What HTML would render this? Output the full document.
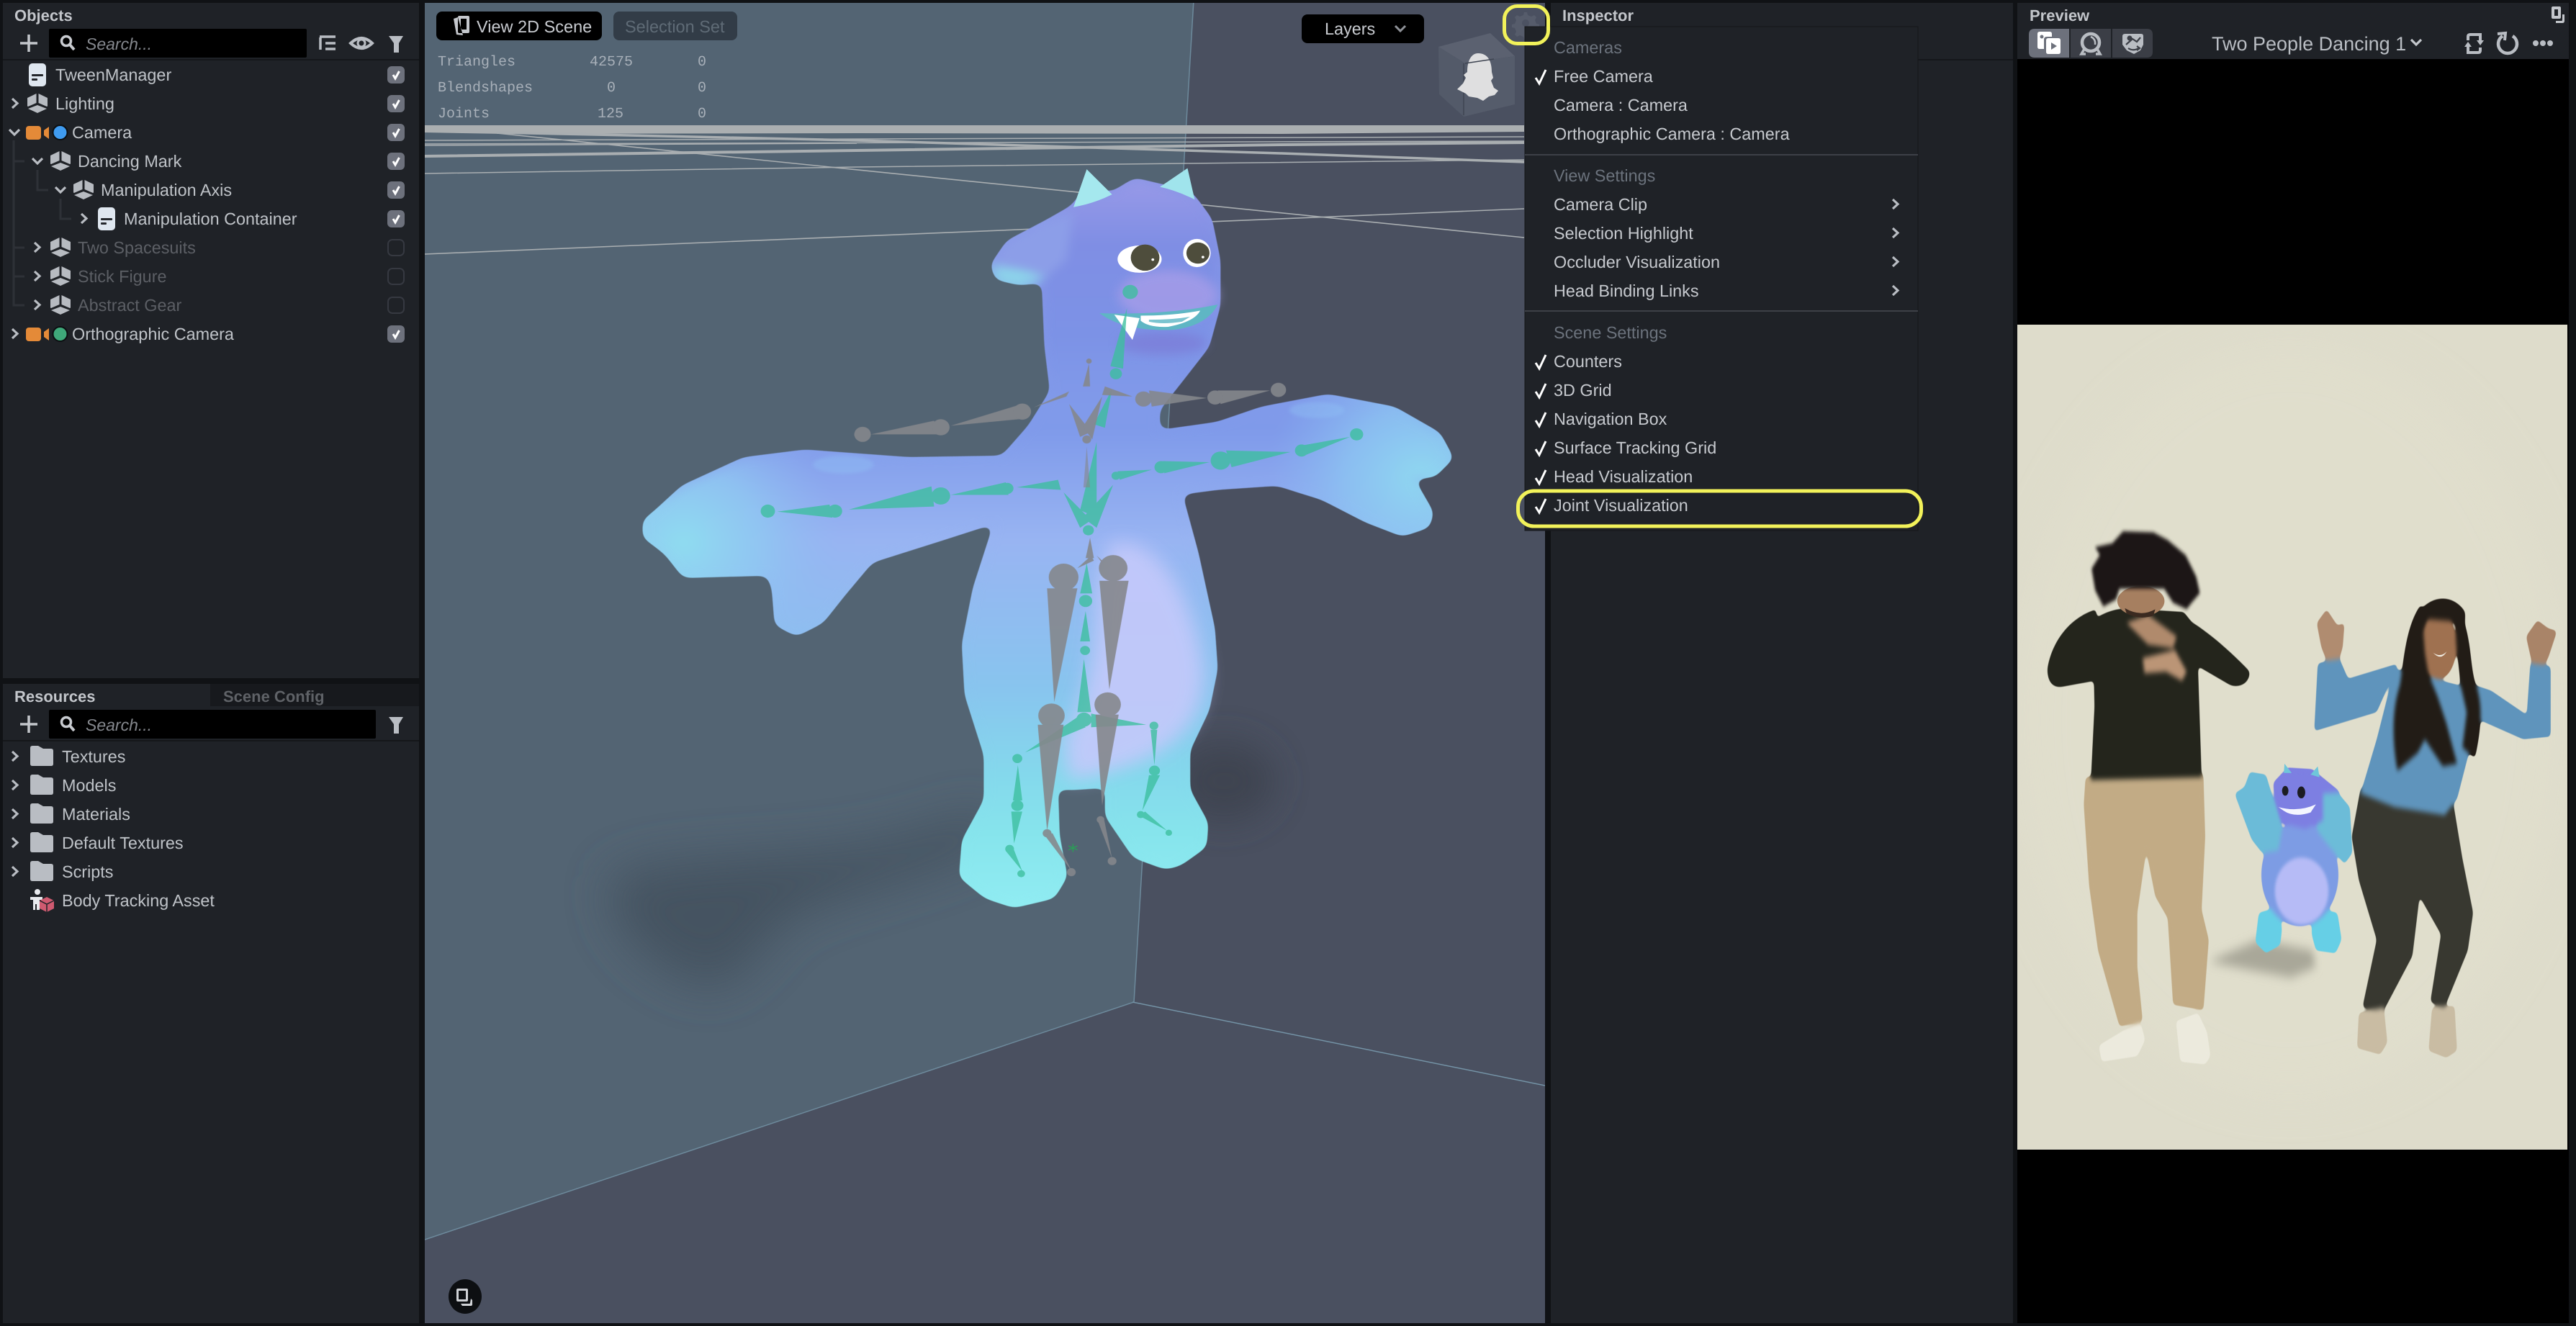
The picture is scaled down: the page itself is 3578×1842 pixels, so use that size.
<!DOCTYPE html>
<html><head><meta charset="utf-8"><title>Lens Studio</title>
<style>
html,body{margin:0;padding:0;background:#0f1114;width:3578px;height:1842px;overflow:hidden}
svg{display:block;position:absolute;left:0;top:0}
text{font-family:"Liberation Sans",sans-serif;font-size:23.4px;fill:#bfc3c8;text-rendering:geometricPrecision}
.b{font-weight:700;font-size:22px;fill:#c3c6cb}
.dim{fill:#5c5f65}
.s{font-style:italic;font-size:23px;fill:#85888e}
.m{font-family:"Liberation Mono",monospace;font-size:20px;fill:#a8b0b9}
.h{fill:#6b727c}
.mi{fill:#c6c9ce}
</style></head><body>
<svg width="3578" height="1842" viewBox="0 0 3578 1842" xmlns="http://www.w3.org/2000/svg">
<defs>
<filter id="b60" x="-50%" y="-50%" width="200%" height="200%"><feGaussianBlur stdDeviation="32"/></filter>
<filter id="b25" x="-50%" y="-50%" width="200%" height="200%"><feGaussianBlur stdDeviation="18"/></filter>
<filter id="b10" x="-50%" y="-50%" width="200%" height="200%"><feGaussianBlur stdDeviation="10"/></filter>
<filter id="b3" x="-20%" y="-20%" width="140%" height="140%"><feGaussianBlur stdDeviation="3.500"/></filter>
<filter id="b14" x="-50%" y="-50%" width="200%" height="200%"><feGaussianBlur stdDeviation="24"/></filter>
<filter id="sm" x="-10%" y="-10%" width="120%" height="120%" color-interpolation-filters="sRGB"><feGaussianBlur stdDeviation="9"/><feComponentTransfer><feFuncA type="linear" slope="14" intercept="-6.500"/></feComponentTransfer></filter>
<filter id="sp" x="-10%" y="-10%" width="120%" height="120%" color-interpolation-filters="sRGB"><feGaussianBlur stdDeviation="5"/><feComponentTransfer><feFuncA type="linear" slope="6" intercept="-2.500"/></feComponentTransfer></filter>
<linearGradient id="mg" gradientUnits="userSpaceOnUse" x1="0" y1="60" x2="0" y2="1510">
<stop offset="0" stop-color="#8a96e6"/><stop offset=".35" stop-color="#7f9aea"/><stop offset=".5" stop-color="#98b4f2"/><stop offset=".7" stop-color="#88c4ee"/><stop offset=".82" stop-color="#84d8ec"/><stop offset=".9" stop-color="#86e4ec"/><stop offset="1" stop-color="#90ecf2"/>
</linearGradient>
<radialGradient id="hl" gradientUnits="userSpaceOnUse" cx="130" cy="790" r="290"><stop offset="0" stop-color="#8fdcf0"/><stop offset=".5" stop-color="#8fc8f2" stop-opacity=".8"/><stop offset="1" stop-color="#8fb8f2" stop-opacity="0"/></radialGradient>
<radialGradient id="hr" gradientUnits="userSpaceOnUse" cx="1470" cy="660" r="280"><stop offset="0" stop-color="#8fd8f0"/><stop offset=".5" stop-color="#8cc4f2" stop-opacity=".8"/><stop offset="1" stop-color="#88b4f2" stop-opacity="0"/></radialGradient>
<linearGradient id="ho" gradientUnits="userSpaceOnUse" x1="850" y1="60" x2="850" y2="520"><stop offset="0" stop-color="#9a9ae8"/><stop offset=".3" stop-color="#7f8ee4"/><stop offset=".7" stop-color="#7c92e6"/><stop offset="1" stop-color="#7c96e8" stop-opacity="0"/></linearGradient>
<g id="grp"><path d="M0 6 L12.500 0 L12.500 13 L1 18 Q0 18 0 17Z M15.500 0 L28 6 L28 17 Q28 18 27 18 L15.500 13Z M14 16 L27 21 L14 27 L1 21Z" fill="#b7bbc1"/></g>
<g id="scr"><rect width="24" height="32" rx="5" fill="#dfe7f0"/><rect x="4" y="15" width="16" height="3" rx="1" fill="#24272c"/><rect x="4" y="21" width="8" height="3" rx="1" fill="#24272c"/></g>
<g id="cam"><rect x="0" y="0" width="21" height="19" rx="4" fill="#e48a38"/><path d="M25 6 L32 1 L32 18 L25 13Z" fill="#e48a38"/></g>
<path id="cr" d="M0 0 L7 6.500 L0 13" fill="none" stroke="#b9bdc3" stroke-width="3.200"/>
<path id="cd" d="M0 0 L7 7 L14 0" fill="none" stroke="#b9bdc3" stroke-width="3.200"/>
<g id="on"><rect width="24" height="24" rx="6" fill="#6d717c"/><path d="M8 12 L11 17 L16.500 7" fill="none" stroke="#fff" stroke-width="3"/></g>
<rect id="off" x="1" y="1" width="22" height="22" rx="6" fill="none" stroke="#363941" stroke-width="2"/>
<path id="fold" d="M0 3 Q0 0 3 0 L11 0 L18 4 L29 4 Q32 4 32 7 L32 25 Q32 28 29 28 L3 28 Q0 28 0 25Z" fill="#b9bdc3"/>
<g id="srch"><circle cx="-2" cy="-3" r="6.500" fill="none" stroke="#c8cbd0" stroke-width="3.500"/><path d="M3 2 L9 9" stroke="#c8cbd0" stroke-width="4"/></g>
<path id="plus" d="M-12 0 H12 M0 -12 V12" stroke="#c4c7cc" stroke-width="3.500"/>
<path id="filt" d="M-10 -10 H10 L4 0 V13 L-3 13 V0Z" fill="#b9bdc3"/>
<path id="mck" d="M0 12 L5 20 L14 1" fill="none" stroke="#fff" stroke-width="3"/>
</defs>

<!-- app background -->
<rect width="3578" height="1842" fill="#101215"/>

<!-- Objects panel -->
<rect x="4" y="4" width="578" height="938" fill="#1f2227"/>
<rect x="4" y="82" width="578" height="2" fill="#15171a"/>
<text class="b" x="20" y="29">Objects</text>
<use href="#plus" x="40" y="60"/>
<rect x="68" y="40" width="358" height="40" rx="2" fill="#000"/>
<use href="#srch" x="94" y="60"/>
<text class="s" x="119" y="69">Search...</text>
<path d="M444 51 H466 M452 60 H466 M452 68 H466 M445 52 V69" stroke="#b9bdc3" stroke-width="3.500" fill="none"/>
<path d="M487 60 Q502 46 517 60 Q502 74 487 60Z" fill="none" stroke="#b9bdc3" stroke-width="4"/><circle cx="502" cy="60" r="5" fill="none" stroke="#b9bdc3" stroke-width="3"/>
<use href="#filt" x="550" y="60"/>

<path d="M19 195 V424 H34 M19 224 H34 M19 344 H34 M19 384 H34 M52 236 V264 H67 M84 276 V304 H99" fill="none" stroke="#2e3137" stroke-width="3"/>

<use href="#scr" x="40" y="88"/><text x="77" y="112">TweenManager</text>
<use href="#cr" x="17" y="137"/><use href="#grp" x="38" y="130"/><text x="77" y="152">Lighting</text>
<use href="#cd" x="13" y="180"/><use href="#cam" x="36" y="175"/><circle cx="83.500" cy="184" r="10" fill="#3f9bf0" stroke="#0b0e11" stroke-width="2"/><text x="100" y="192">Camera</text>
<use href="#cd" x="45" y="220"/><use href="#grp" x="70" y="210"/><text x="108" y="232">Dancing Mark</text>
<use href="#cd" x="77" y="260"/><use href="#grp" x="102" y="250"/><text x="140" y="272">Manipulation Axis</text>
<use href="#cr" x="113" y="297"/><use href="#scr" x="136" y="288"/><text x="172" y="312">Manipulation Container</text>
<use href="#cr" x="48" y="337"/><use href="#grp" x="70" y="330"/><text class="dim" x="108" y="352">Two Spacesuits</text>
<use href="#cr" x="48" y="377"/><use href="#grp" x="70" y="370"/><text class="dim" x="108" y="392">Stick Figure</text>
<use href="#cr" x="48" y="417"/><use href="#grp" x="70" y="410"/><text class="dim" x="108" y="432">Abstract Gear</text>
<use href="#cr" x="17" y="457"/><use href="#cam" x="36" y="455"/><circle cx="83.500" cy="464" r="10" fill="#3fa87a" stroke="#0b0e11" stroke-width="2"/><text x="100" y="472">Orthographic Camera</text>
<use href="#on" x="538" y="92"/><use href="#on" x="538" y="132"/><use href="#on" x="538" y="172"/><use href="#on" x="538" y="212"/><use href="#on" x="538" y="252"/><use href="#on" x="538" y="292"/>
<use href="#off" x="538" y="332"/><use href="#off" x="538" y="372"/><use href="#off" x="538" y="412"/><use href="#on" x="538" y="452"/>

<!-- Resources panel -->
<rect x="4" y="950" width="578" height="888" fill="#1f2227"/>
<rect x="292" y="950" width="290" height="31" fill="#17191d"/>
<rect x="4" y="1028" width="578" height="2" fill="#15171a"/>
<text class="b" x="20" y="975">Resources</text>
<text class="b dim" x="310" y="975" style="fill:#5f6267">Scene Config</text>
<use href="#plus" x="40" y="1006"/>
<rect x="68" y="986" width="454" height="40" rx="2" fill="#000"/>
<use href="#srch" x="94" y="1006"/>
<text class="s" x="119" y="1015">Search...</text>
<use href="#filt" x="550" y="1006"/>
<use href="#cr" x="17" y="1044"/><use href="#fold" x="42" y="1036"/><text x="86" y="1059">Textures</text>
<use href="#cr" x="17" y="1084"/><use href="#fold" x="42" y="1076"/><text x="86" y="1099">Models</text>
<use href="#cr" x="17" y="1124"/><use href="#fold" x="42" y="1116"/><text x="86" y="1139">Materials</text>
<use href="#cr" x="17" y="1164"/><use href="#fold" x="42" y="1156"/><text x="86" y="1179">Default Textures</text>
<use href="#cr" x="17" y="1204"/><use href="#fold" x="42" y="1196"/><text x="86" y="1219">Scripts</text>
<g transform="translate(42,1235)"><circle cx="10" cy="4" r="4" fill="#e8eaee"/><path d="M0 11 H17 V15 H13 V29 H9 V21 H7 V29 H4 V15 H0Z" fill="#e8eaee"/><path d="M23 11 L33 16 V27 L23 32 L13 27 V16Z" fill="#cf5a70"/><path d="M13 16 L23 21 L33 16 M23 21 V32" stroke="#1f2227" stroke-width="1.500" fill="none"/></g>
<text x="86" y="1259">Body Tracking Asset</text>

<!-- Viewport -->
<svg x="590" y="4" width="1556" height="1834" viewBox="590 4 1556 1834">
<rect x="590" y="4" width="1556" height="1834" fill="#4a5060"/>
<path d="M590 0 H1658 L1575 1392 L590 1722Z" fill="#536473"/>
<path d="M1658 0 L1575 1392 L590 1722" fill="none" stroke="#6d8a9c" stroke-width="1.500"/>
<path d="M1573 1392 L2146 1508" fill="none" stroke="#7493a6" stroke-width="1.500"/>
<!-- shadows -->
<g filter="url(#b60)">
<path d="M850 1220 C930 1180 1120 1200 1260 1160 L1360 1130 L1400 1160 C1300 1220 1180 1230 1090 1280 C1050 1330 1020 1370 980 1370 C920 1350 840 1300 850 1220Z" fill="#445361"/>
</g>
<ellipse cx="1700" cy="1085" rx="70" ry="55" fill="#3a3f4c" filter="url(#b14)" opacity=".75"/>

<!-- grid -->
<g fill="none" stroke="#a9aeb1">
<path d="M590 174 H2117 V183 L1780 186 L1190 185 L700 186 L590 184Z" fill="#abafb1" stroke="none"/>
<path d="M590 195 L2117 190" stroke-width="1.500"/>
<path d="M590 200 L2117 196" stroke-width="1.500"/>
<path d="M590 217 L1190 209 L1780 201 L2117 198" stroke-width="4"/>
<path d="M690 184 L1190 195 L1780 213 L2117 225" stroke-width="3.500"/>
<path d="M590 202 L1190 199" stroke-width="1.500"/>
<path d="M590 241 L1190 232 L1646 227 L2117 222" stroke-width="1.500"/>
<path d="M690 185 L2117 330" stroke-width="1.600"/>
<path d="M590 353 L2117 290" stroke-width="1.600"/>
</g>

<!-- monster -->
<g transform="translate(850,200) scale(.765,.7015)">
<g filter="url(#sm)">
<path d="M838 125 L862 90 L908 100 L950 72 L1000 85 L1045 95 L1058 110 L1085 150 L1100 230 L1100 320 L1080 400 L1030 470 L990 525 L990 572 L1100 555 L1180 525 L1300 500 L1420 525 L1500 575 L1523 622 L1490 655 L1450 660 L1487 730 L1480 755 L1435 772 L1370 745 L1290 700 L1210 672 L1100 680 L1030 690 L1060 810 L1090 960 L1095 1040 L1080 1120 L1045 1200 L1045 1280 L1078 1345 L1075 1390 L1030 1425 L1005 1432 L950 1410 L900 1330 L900 1270 L830 1275 L805 1270 L808 1370 L822 1450 L800 1490 L730 1508 L680 1490 L635 1450 L640 1380 L680 1300 L680 1210 L645 1090 L640 990 L660 880 L700 745 L600 780 L470 825 L420 890 L380 945 L335 970 L300 950 L295 880 L285 850 L130 852 L100 810 L65 780 L65 745 L130 680 L240 625 L350 610 L540 625 L710 622 L760 560 L800 490 L790 400 L785 270 L740 275 L700 265 L692 240 L720 195 L790 155Z" fill="url(#mg)" stroke="url(#mg)" stroke-width="10" stroke-linejoin="round"/>
<path d="M55 745 L130 680 L240 625 L350 610 L560 625 L480 830 L420 890 L380 955 L335 975 L295 950 L290 880 L285 855 L130 860 L95 810 L55 780Z" fill="url(#hl)"/>
<path d="M1150 535 L1300 495 L1420 520 L1505 575 L1528 622 L1495 660 L1455 660 L1492 730 L1485 760 L1435 778 L1370 750 L1290 705 L1190 675Z" fill="url(#hr)"/>
<path d="M838 125 L908 100 L950 75 L1000 88 L1058 110 L1085 150 L1100 230 L1100 320 L1080 400 L1035 470 L985 525 L800 525 L790 400 L785 270 L790 155Z" fill="url(#ho)"/>
<path d="M692 240 L720 195 L790 155 L838 135 L825 230 L790 262 L740 275 L700 265Z" fill="#8c9ee8"/>
<path d="M692 240 L700 268 L740 278 L790 264 L750 250Z" fill="#8cd4ea"/>
</g>
<ellipse cx="420" cy="635" rx="55" ry="18" fill="#92c6f6" filter="url(#b3)" opacity=".35"/>
<ellipse cx="1280" cy="527" rx="50" ry="16" fill="#92c6f6" filter="url(#b3)" opacity=".35"/>
<path d="M905 790 C1000 770 1060 920 1075 1040 C1080 1160 1000 1230 830 1260 L820 1180 C860 1100 880 1000 880 890Z" fill="#c5c9fb" filter="url(#b25)" opacity=".9"/>
<!-- horns -->
<path d="M838 125 L862 50 L908 100 Q875 118 838 125Z" fill="#a5e8ee"/><path d="M995 85 L1045 48 L1058 110 Q1025 92 995 85Z" fill="#a0e4ec"/>
<!-- snout -->
<ellipse cx="1010" cy="300" rx="90" ry="50" fill="#a69ce8" filter="url(#b10)" opacity=".8"/>
<ellipse cx="1000" cy="395" rx="80" ry="22" fill="#7b77d4" filter="url(#b10)" opacity=".6"/>
<!-- eyes -->
<ellipse cx="958" cy="228" rx="40" ry="27" fill="#fff"/><circle cx="968" cy="225" r="26" fill="#4e4d3c"/><circle cx="982" cy="229" r="2.500" fill="#fff"/>
<ellipse cx="1062" cy="216" rx="25" ry="28" fill="#fff"/><circle cx="1064" cy="216" r="21" fill="#4e4d3c"/><circle cx="1073" cy="224" r="2.500" fill="#fff"/>
<!-- mouth -->
<path d="M885 335 Q1000 340 1100 318 Q1080 360 1020 368 Q930 372 885 335Z" fill="#5fb6c4"/>
<path d="M960 340 Q1020 340 1068 330 Q1058 352 1010 362 Q975 364 960 350Z" fill="#fff"/><path d="M975 348 Q1020 348 1050 342 L1035 352 Q1000 358 975 352Z" fill="#7cc4d0"/>
<path d="M912 338 L958 345 L945 388Z" fill="#fff"/>
<!-- green bones -->
<g fill="#3cbf9e" opacity=".78">
<circle cx="941" cy="293" r="14"/><path d="M935 325 L905 440 L928 445Z"/><circle cx="915" cy="455" r="11"/><path d="M908 485 L875 555 L895 562Z"/>
<path d="M880 590 L850 725 L880 740Z"/><path d="M820 690 L850 760 L870 745Z"/><path d="M910 675 L855 740 L880 760Z"/><circle cx="865" cy="765" r="10"/>
<circle cx="283" cy="727" r="13"/><path d="M300 728 L395 714 L400 740Z"/><circle cx="405" cy="727" r="13"/><path d="M430 724 L580 678 L585 718Z"/><circle cx="597" cy="697" r="17"/><path d="M615 695 L715 670 L720 695Z"/><circle cx="718" cy="682" r="11"/><path d="M735 680 L810 665 L815 685Z"/>
<circle cx="1352" cy="575" r="12"/><path d="M1340 580 L1248 598 L1255 618Z"/><circle cx="1252" cy="607" r="12"/><path d="M1232 610 L1115 607 L1125 640Z"/><circle cx="1105" cy="627" r="18"/><path d="M1085 630 L1000 628 L1003 652Z"/><circle cx="997" cy="640" r="12"/><path d="M980 645 L918 648 L922 665Z"/><circle cx="915" cy="657" r="8"/>
<path d="M862 830 L850 890 L872 890Z"/><circle cx="860" cy="905" r="12"/><path d="M860 925 L850 985 L868 985Z"/><circle cx="859" cy="1003" r="9"/><path d="M857 1020 L845 1125 L870 1125Z"/><circle cx="857" cy="1140" r="14"/>
<path d="M750 1205 L845 1135 L860 1155Z"/><path d="M870 1128 L970 1150 L870 1155Z"/>
<circle cx="736" cy="1217" r="9"/><path d="M737 1230 L728 1300 L745 1300Z"/><circle cx="736" cy="1310" r="11"/><path d="M745 1322 L725 1322 L730 1385Z"/><circle cx="722" cy="1396" r="8"/><path d="M715 1400 L730 1398 L745 1440Z"/><circle cx="743" cy="1445" r="7"/>
<circle cx="984" cy="1152" r="8"/><path d="M978 1160 L990 1160 L985 1230Z"/><circle cx="985" cy="1241" r="10"/><path d="M975 1250 L995 1250 L963 1320Z"/><circle cx="960" cy="1328" r="7"/><path d="M957 1330 L968 1322 L1008 1360Z"/><circle cx="1011" cy="1364" r="6"/>
</g>
<!-- grey bones -->
<g fill="#85878c" opacity=".9">
<circle cx="455" cy="575" r="15"/><path d="M470 575 L585 548 L590 575Z"/><circle cx="597" cy="561" r="16"/><path d="M615 558 L735 518 L740 545Z"/><circle cx="745" cy="530" r="16"/><path d="M765 522 L830 490 L825 500Z"/>
<circle cx="1210" cy="487" r="14"/><path d="M1195 488 L1100 488 L1105 515Z"/><circle cx="1095" cy="502" r="14"/><path d="M1080 503 L975 488 L980 520Z"/><circle cx="965" cy="505" r="15"/><path d="M945 500 L895 480 L890 497Z"/>
<circle cx="866" cy="430" r="5"/><path d="M866 435 L855 480 L868 480Z"/><path d="M830 515 L850 580 L870 570Z"/><path d="M890 500 L855 560 L872 585Z"/><circle cx="862" cy="585" r="8"/><path d="M862 600 L856 680 L868 680Z" opacity=".7"/>
<path d="M868 780 L860 820 L875 820Z"/><path d="M845 840 L870 815 L875 825Z"/><path d="M880 815 L905 840 L900 845Z"/>
<circle cx="820" cy="858" r="27"/><path d="M790 880 L845 880 L803 1105Z"/><circle cx="910" cy="840" r="26"/><path d="M885 865 L938 865 L903 1080Z"/>
<circle cx="798" cy="1132" r="24"/><path d="M773 1150 L820 1150 L790 1360Z"/><circle cx="900" cy="1110" r="24"/><path d="M878 1130 L920 1130 L890 1310Z"/>
<circle cx="790" cy="1365" r="8"/><path d="M785 1368 L800 1365 L835 1440Z"/><circle cx="834" cy="1442" r="8"/><circle cx="887" cy="1338" r="7"/><path d="M882 1340 L894 1340 L908 1415Z"/><circle cx="908" cy="1420" r="8"/>
</g>
<path d="M837 1386 V1402 M829 1390 L845 1398 M845 1390 L829 1398" stroke="#2c9c58" stroke-width="2"/>
</g>

<!-- nav cube -->
<path d="M1998 65 L2070 46 L2104 78 L2035 88Z" fill="#5b6170"/>
<path d="M1998 65 L2035 88 L2033 162 L1999 131Z" fill="#535a69"/>
<path d="M2035 88 L2104 78 V145 L2033 162Z" fill="#555c6b"/>
<path d="M2033 88 V160" stroke="#3f4552" stroke-width="1.500" fill="none"/>
<path d="M2038 100 C2038 82 2045 74 2053 74 C2066 74 2072 84 2072 100 L2074 108 L2071 112 L2075 122 L2081 126 L2076 132 L2068 134 L2060 140 L2052 136 L2040 134 L2036 130 L2024 124 L2032 116 L2036 108 L2033 104Z" fill="#dfdfe0"/>
<path d="M2035 88 L2075 82" stroke="#3f4552" stroke-width="1.500"/>

<!-- gear -->
<path d="M2120 17 l4 0 l1 4 l5 2 l4 -2 l3 3 l-2 4 l2 5 l4 1 l0 4 l-4 1 l-2 5 l2 4 l-3 3 l-4 -2 l-5 2 l-1 4 l-4 0 l-1 -4 l-5 -2 l-4 2 l-3 -3 l2 -4 l-2 -5 l-4 -1 l0 -4 l4 -1 l2 -5 l-2 -4 l3 -3 l4 2 l5 -2Z" fill="#565c6b" transform="translate(-3,0)"/>
<circle cx="2119" cy="32" r="5" fill="#4c5262"/>

<rect x="606" y="16" width="230" height="40" rx="8" fill="#000"/>
<path d="M636 24 L630 26 L634 48 L643 49 M638 22 H650 Q652 22 652 24 V44 Q652 46 650 46 H638 Q636 46 636 44 V24 Q636 22 638 22Z M640 26 V41 H648 V26Z" fill="#c5c8cd" fill-rule="evenodd"/>
<text x="662" y="45" style="font-size:23.500px;fill:#c9ccd1">View 2D Scene</text>
<rect x="852" y="16" width="172" height="40" rx="8" fill="#323c47"/>
<text x="868" y="45" style="font-size:23.500px;fill:#5f6b76">Selection Set</text>
<text class="m" x="608" y="91">Triangles</text><text class="m" x="819" y="91">42575</text><text class="m" x="969" y="91">0</text>
<text class="m" x="608" y="127">Blendshapes</text><text class="m" x="843" y="127">0</text><text class="m" x="969" y="127">0</text>
<text class="m" x="608" y="163">Joints</text><text class="m" x="830" y="163">125</text><text class="m" x="969" y="163">0</text>
<rect x="1808" y="20" width="170" height="40" rx="8" fill="#000"/>
<text x="1840" y="48" style="fill:#c9ccd1">Layers</text>
<path d="M1938 36 L1945 43 L1952 36" fill="none" stroke="#8f9298" stroke-width="3"/>
<ellipse cx="646" cy="1801" rx="23" ry="24" fill="#0d0f12"/>
<path d="M636 1790 H648 Q650 1790 650 1792 V1806 Q650 1808 648 1808 H636 Q634 1808 634 1806 V1792 Q634 1790 636 1790Z M637 1793 V1805 H647 V1793Z" fill="#d0d2d6" fill-rule="evenodd"/>
<path d="M654 1804 L656 1806 V1812 Q656 1814 654 1814 L642 1814 L640 1811 H652 Q653 1811 653 1810Z" fill="#d0d2d6"/>
</svg>

<!-- Inspector panel -->
<rect x="2154" y="4" width="642" height="1834" fill="#1f2227"/>
<rect x="2154" y="82" width="642" height="2" fill="#15171a"/>
<text class="b" x="2170" y="29">Inspector</text>

<!-- Menu -->
<rect x="2118" y="37" width="546" height="700" fill="#1f2227" stroke="#15171a" stroke-width="1"/>
<text class="h" x="2158" y="74">Cameras</text>
<use href="#mck" x="2133" y="96"/><text class="mi" x="2158" y="114">Free Camera</text>
<text class="mi" x="2158" y="154">Camera : Camera</text>
<text class="mi" x="2158" y="194">Orthographic Camera : Camera</text>
<rect x="2118" y="214" width="546" height="2" fill="#3d4047"/>
<text class="h" x="2158" y="252">View Settings</text>
<text class="mi" x="2158" y="292">Camera Clip</text><use href="#cr" x="2629" y="277"/>
<text class="mi" x="2158" y="332">Selection Highlight</text><use href="#cr" x="2629" y="317"/>
<text class="mi" x="2158" y="372">Occluder Visualization</text><use href="#cr" x="2629" y="357"/>
<text class="mi" x="2158" y="412">Head Binding Links</text><use href="#cr" x="2629" y="397"/>
<rect x="2118" y="431" width="546" height="2" fill="#3d4047"/>
<text class="h" x="2158" y="470">Scene Settings</text>
<use href="#mck" x="2133" y="492"/><text class="mi" x="2158" y="510">Counters</text>
<use href="#mck" x="2133" y="532"/><text class="mi" x="2158" y="550">3D Grid</text>
<use href="#mck" x="2133" y="572"/><text class="mi" x="2158" y="590">Navigation Box</text>
<use href="#mck" x="2133" y="612"/><text class="mi" x="2158" y="630">Surface Tracking Grid</text>
<use href="#mck" x="2133" y="652"/><text class="mi" x="2158" y="670">Head Visualization</text>
<use href="#mck" x="2133" y="692"/><text class="mi" x="2158" y="710">Joint Visualization</text>
<!-- highlights -->
<rect x="2089.500" y="8.500" width="61" height="52" rx="18" fill="none" stroke="#f2f25a" stroke-width="5"/>
<rect x="2108.500" y="682" width="560" height="49" rx="22" fill="none" stroke="#f2f25a" stroke-width="5"/>

<!-- Preview panel -->
<rect x="2802" y="4" width="766" height="1834" fill="#000"/>
<rect x="2802" y="4" width="766" height="78" fill="#1f2227"/>
<text class="b" x="2819" y="29">Preview</text>
<path d="M2818 48 Q2818 40 2826 40 H2874 V80 H2826 Q2818 80 2818 72Z" fill="#6d717c"/>
<rect x="2876" y="40" width="56" height="40" fill="#3b3e46"/>
<path d="M2934 40 H2982 Q2990 40 2990 48 V72 Q2990 80 2982 80 H2934Z" fill="#3b3e46"/>
<path d="M2833 44 H2847 Q2850 44 2850 47 V51 H2843 Q2839 51 2839 55 V68 H2833 Q2830 68 2830 65 V47 Q2830 44 2833 44Z" fill="#fff"/>
<path d="M2845 53 H2859 Q2862 53 2862 56 V72 Q2862 75 2859 75 H2845 Q2842 75 2842 72 V56 Q2842 53 2845 53Z" fill="#fff"/><path d="M2849 59 L2857 64 L2849 69Z" fill="#6d717c"/>
<circle cx="2836" cy="51" r="2.500" fill="#6d717c"/>
<circle cx="2904" cy="59" r="12" fill="none" stroke="#b9bdc3" stroke-width="4.500"/><path d="M2895 68 L2891 75 H2897 M2913 68 L2917 75 H2911" stroke="#b9bdc3" stroke-width="3.500" fill="none"/><path d="M2904 51 Q2911 54 2910 62" stroke="#b9bdc3" stroke-width="2.500" fill="none"/>
<path d="M2952 47 H2974 Q2977 47 2977 50 V62 L2973 70 L2964 75 L2954 70 L2948 62 V50 Q2948 47 2952 47Z" fill="#b9bdc3"/><circle cx="2958" cy="53" r="3.500" fill="#3b3e46"/><path d="M2953 62 L2962 54 L2968 58 L2973 52 M2956 67 Q2964 72 2972 66 M2968 64 L2972 67 L2968 70" stroke="#3b3e46" stroke-width="2.200" fill="none"/>
<text x="3072" y="70" style="font-size:27px;fill:#b9bdc3">Two People Dancing 1</text>
<path d="M3349 55 L3356 62 L3363 55" fill="none" stroke="#c4c7cc" stroke-width="3.200"/>
<g fill="none" stroke="#b9bdc3" stroke-width="4">
<path d="M3428 56 V51 Q3428 48 3431 48 H3445 V58 M3445 66 V70 Q3445 73 3442 73 H3428 V64"/><path d="M3440 56 H3450 L3445 63Z M3423 65 H3433 L3428 58Z" fill="#b9bdc3" stroke="none"/>
<path d="M3476 50 A13 13 0 1 0 3490 50" stroke-width="4.500"/><path d="M3469 47 L3480 46 L3479 56" stroke-width="4"/>
</g>
<circle cx="3522" cy="60" r="4" fill="#b9bdc3"/><circle cx="3532" cy="60" r="4" fill="#b9bdc3"/><circle cx="3542" cy="60" r="4" fill="#b9bdc3"/>
<path d="M3546 9 H3555 Q3557 9 3557 11 V24 Q3557 26 3555 26 H3546 Q3544 26 3544 24 V11 Q3544 9 3546 9Z M3548 13 V22 H3553 V13Z" fill="#c4c7cc" fill-rule="evenodd"/>
<path d="M3559 20 H3562 V29 Q3562 32 3559 32 H3550 V29 H3558 Q3559 29 3559 28Z" fill="#c4c7cc"/>

<!-- Preview image -->
<svg x="2802" y="451" width="764" height="1146" viewBox="2802 451 764 1146">
<rect x="2802" y="451" width="764" height="1146" fill="#dedccb"/>
<ellipse cx="3180" cy="1000" rx="380" ry="520" fill="#e1dfcd" filter="url(#b60)" opacity=".7"/>
<g transform="translate(2800,440) scale(.4962,.7526)">
<!-- shadow -->
<path d="M540 1190 L680 1150 L830 1170 L840 1200 L770 1220 L650 1205Z" fill="#a9a799" filter="url(#b10)"/>
<!-- man -->
<g filter="url(#sp)">
<path d="M195 850 C300 840 420 840 525 845 L530 960 L520 1095 L540 1150 L525 1280 L440 1270 L425 1110 L390 1070 L365 985 L340 1100 L340 1200 L355 1300 L290 1310 L230 1170 L205 1050 L190 900Z" fill="#c2ab85"/>
<path d="M232 1345 L300 1318 L350 1305 L362 1335 L340 1365 L240 1375Z" fill="#eceadd"/>
<path d="M448 1300 L510 1285 L535 1320 L545 1365 L530 1380 L460 1375Z" fill="#eceadd"/>
<path d="M215 560 C260 540 300 535 350 540 L470 545 L500 570 L510 650 L520 850 L210 855 L220 720Z" fill="#24251c"/>
<path d="M225 540 C150 555 100 600 88 650 C88 680 110 685 130 683 L360 655 L360 620 L230 620Z" fill="#24251c"/>
<path d="M440 545 C510 565 590 610 655 655 C655 680 620 685 600 680 L470 630Z" fill="#24251c"/>
<path d="M310 565 L370 550 L450 590 L440 612 L370 605Z" fill="#b08a6c"/>
<path d="M355 630 L445 615 L478 655 L465 672 L420 655 L360 658Z" fill="#bb9576"/>
</g>
<ellipse cx="350" cy="525" rx="66" ry="28" fill="#a67f60"/>
<path d="M305 538 Q350 555 390 540 L385 552 Q345 560 310 548Z" fill="#3b2a20"/>
<path d="M212 465 L235 440 L222 425 L270 418 L300 396 L385 398 L425 412 L475 440 L505 480 L515 510 L492 528 L478 540 L440 528 L415 502 L290 502 L280 522 L245 535 L222 505Z" fill="#1b1812" filter="url(#b3)"/>
<!-- woman -->
<g filter="url(#sp)">
<path d="M965 870 L1220 880 L1250 1000 L1280 1100 L1265 1170 L1200 1275 L1160 1265 L1190 1140 L1130 1070 L1110 1180 L1030 1280 L970 1275 L1010 1150 L960 1040 L940 960Z" fill="#383830"/>
<path d="M960 1285 L1030 1275 L1040 1340 L1020 1362 L955 1350Z" fill="#c9bca3"/>
<path d="M1165 1275 L1228 1272 L1235 1355 L1205 1368 L1155 1355Z" fill="#c9bca3"/>
<path d="M1060 650 L1240 680 L1300 720 L1270 800 L1235 890 L1200 920 L1060 905 L965 880 L1010 780Z" fill="#5f94bc"/>
<path d="M1070 640 L930 668 L905 630 L845 640 L835 765 L1010 730Z" fill="#5f94bc"/>
<path d="M1240 670 L1330 690 L1430 735 L1440 640 L1497 645 L1497 775 L1420 780 L1300 745Z" fill="#5f94bc"/>
<path d="M842 565 L870 540 L900 570 L920 565 L915 610 L905 632 L870 635 L855 610Z" fill="#b08c70"/>
<path d="M1428 590 L1460 560 L1490 575 L1515 580 L1490 630 L1480 642 L1445 640Z" fill="#a98468"/>
<ellipse cx="1185" cy="608" rx="48" ry="60" fill="#9f7150"/>
<path d="M1135 530 C1090 570 1085 640 1075 680 C1050 730 1055 790 1068 838 L1125 805 L1145 780 L1195 830 L1235 825 L1205 750 L1180 700 L1155 660 L1145 620Z" fill="#221c16"/>
<path d="M1235 530 C1280 590 1268 640 1288 680 C1310 720 1300 770 1285 815 L1250 795 L1262 730 L1245 680 L1232 600Z" fill="#221c16"/>
<path d="M1095 600 C1115 515 1215 500 1258 545 L1255 610 L1225 562 L1150 558 L1125 610Z" fill="#221c16"/>
</g>
<path d="M1168 620 Q1188 630 1206 618 Q1190 636 1168 620Z" fill="#f1ede4"/>
<!-- mini monster -->
<g filter="url(#sp)">
<path d="M680 1100 L735 1090 L745 1130 L740 1160 L700 1175 L670 1155Z M830 1090 L900 1100 L912 1150 L895 1175 L840 1170 L828 1140Z" fill="#66cfe6"/>
<ellipse cx="795" cy="1030" rx="108" ry="95" fill="#7d9ce4"/>
<path d="M612 880 L640 868 L655 840 L700 845 L745 945 L735 985 L690 990 L660 965Z" fill="#6bbbd8"/>
<path d="M845 870 L880 862 L935 905 L942 990 L920 1010 L880 980 L845 950Z" fill="#6cbcd8"/>
<path d="M720 860 L760 832 L830 835 L910 878 L860 880 L860 930 L810 945 L745 935 L725 890Z" fill="#7d7fe2"/>
</g>
<ellipse cx="800" cy="1060" rx="75" ry="62" fill="#b6bbf6" filter="url(#b3)"/>
<path d="M752 825 L772 842 L750 842Z M825 845 L845 830 L850 850Z" fill="#6fc6da"/>
<circle cx="754" cy="875" r="9" fill="#1c1c22"/><circle cx="799" cy="878" r="11" fill="#1c1c22"/>
<path d="M735 905 Q790 915 840 900 L825 915 Q780 925 750 912Z" fill="#f4f6ff"/>
</g>
</svg>
</svg>
</body></html>
